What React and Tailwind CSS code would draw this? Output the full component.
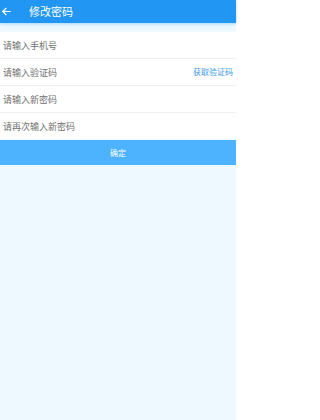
import React from "react";

const font = { fontFamily: '"Noto Sans CJK SC", "Noto Sans", sans-serif' };

function Row({ placeholder, right }) {
  return (
    <div className="flex h-[26px] items-center justify-between bg-white px-[3px]">
      <span className="text-[9px] leading-none text-[#6f6f6f]">{placeholder}</span>
      {right}
    </div>
  );
}

export default function App() {
  return (
    <div className="flex h-[420px] w-[236px] flex-col bg-[#eef8ff]" style={font}>
      <div className="relative flex h-[23px] items-center bg-[#2196f3] shadow-[0_1px_3px_rgba(33,150,243,0.35)]">
        <svg className="ml-[1px] h-[11px] w-[11px]" viewBox="0 0 24 24" fill="none" stroke="white" strokeWidth="2.6" strokeLinecap="round" strokeLinejoin="round">
          <path d="M20 12H4" />
          <path d="M11 5l-7 7 7 7" />
        </svg>
        <span className="ml-[17px] text-[11px] leading-none text-white">修改密码</span>
      </div>
      <div className="mt-[9px] flex flex-col gap-px bg-[#f0f0f0]">
        <Row placeholder="请输入手机号" />
        <Row
          placeholder="请输入验证码"
          right={<span className="text-[8px] leading-none text-[#3d9be9]">获取验证码</span>}
        />
        <Row placeholder="请输入新密码" />
        <Row placeholder="请再次输入新密码" />
      </div>
      <div className="mt-px flex h-[25px] items-center justify-center bg-[#4db3ff]">
        <span className="text-[8px] leading-none text-white">确定</span>
      </div>
    </div>
  );
}
